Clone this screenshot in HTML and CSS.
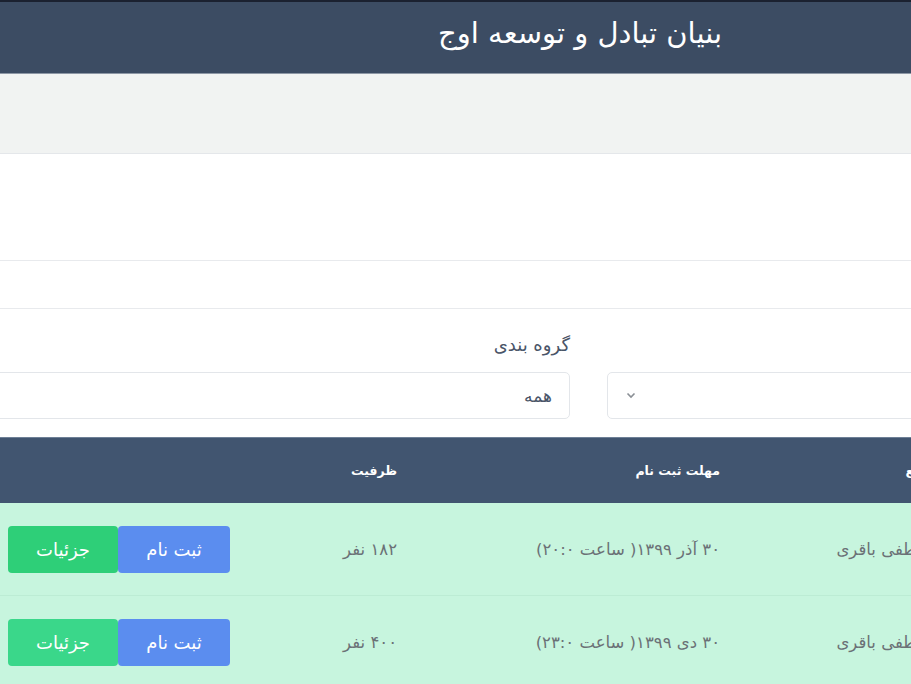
FILE: index.html
```html
<!DOCTYPE html>
<html lang="fa">
<head>
<meta charset="utf-8">
<title>بنیان تبادل و توسعه اوج</title>
<link rel="stylesheet" href="styles.css">
</head>
<body>
<div class="page">
  <header class="topbar">
    <h1 class="title">بنیان تبادل و توسعه اوج</h1>
  </header>
  <div class="band"></div>
  <div class="section tall"></div>
  <div class="section short"></div>
  <div class="filters">
    <div class="field">
      <div class="label"></div>
      <div class="select">
        <span class="value"></span>
        <svg class="chev" width="10" height="7" viewBox="0 0 10 7"><polyline points="1.5,1.5 5,5 8.5,1.5" fill="none" stroke="#8a8f95" stroke-width="1.6"/></svg>
      </div>
    </div>
    <div class="field">
      <div class="label">گروه بندی</div>
      <div class="select">
        <span class="value">همه</span>
        <svg class="chev" width="10" height="7" viewBox="0 0 10 7"><polyline points="1.5,1.5 5,5 8.5,1.5" fill="none" stroke="#8a8f95" stroke-width="1.6"/></svg>
      </div>
    </div>
  </div>
  <div class="table">
    <div class="row head">
      <div class="cell"></div>
      <div class="cell">مرجع</div>
      <div class="cell">مهلت ثبت نام</div>
      <div class="cell">ظرفیت</div>
      <div class="cell"></div>
    </div>
    <div class="row">
      <div class="cell"></div>
      <div class="cell">مصطفی باقری</div>
      <div class="cell">۳۰ آذر ۱۳۹۹( ساعت ۲۰:۰)</div>
      <div class="cell">۱۸۲ نفر</div>
      <div class="cell actions">
        <button class="btn blue">ثبت نام</button>
        <button class="btn green">جزئیات</button>
      </div>
    </div>
    <div class="row">
      <div class="cell"></div>
      <div class="cell">مصطفی باقری</div>
      <div class="cell">۳۰ دی ۱۳۹۹( ساعت ۲۳:۰)</div>
      <div class="cell">۴۰۰ نفر</div>
      <div class="cell actions">
        <button class="btn blue">ثبت نام</button>
        <button class="btn green light">جزئیات</button>
      </div>
    </div>
  </div>
</div>
</body>
</html>
```
FILE: styles.css
```css
html, body {
  margin: 0;
  padding: 0;
  overflow: hidden;
  background: #ffffff;
}
body {
  font-family: "DejaVu Sans", "Noto Sans", sans-serif;
}
.page {
  direction: rtl;
  width: 1277px;
  margin-left: -50px;
}
.topbar {
  box-sizing: border-box;
  height: 74px;
  border-top: 2px solid #1b2130;
  border-bottom: 1px solid #8d97a5;
  background: #3c4c63;
  padding-right: 505px;
  padding-bottom: 8px;
  display: flex;
  align-items: center;
}
.title {
  margin: 0;
  color: #ffffff;
  font-size: 29px;
  font-weight: normal;
  line-height: 1;
}
.band {
  height: 79px;
  background: #f1f3f2;
  border-bottom: 1px solid #e4e7ea;
}
.section {
  border-bottom: 1px solid #e8eaed;
}
.section.tall { height: 106px; }
.section.short { height: 47px; }
.filters {
  display: grid;
  grid-template-columns: 610px 610px;
  gap: 37px;
  padding: 24px 10px 18px 10px;
}
.label {
  height: 24px;
  line-height: 24px;
  font-size: 18px;
  color: #4a5568;
  margin-bottom: 15px;
}
.select {
  box-sizing: border-box;
  height: 47px;
  border: 1px solid #e3e6ea;
  border-radius: 5px;
  display: flex;
  align-items: center;
  justify-content: space-between;
  padding: 0 17px 0 18px;
  font-size: 17px;
  color: #4a5568;
}
.chev { display: block; }
.table {
  padding-left: 58px;
}
.row {
  display: grid;
  grid-template-columns: 287px 220px 323px 167px 222px;
  align-items: center;
  box-sizing: border-box;
  height: 93px;
  margin-left: -58px;
  padding-left: 58px;
  background: #c7f5de;
  border-bottom: 1px solid #bcecd4;
  font-size: 16.5px;
  color: #6b7176;
}
.row.head {
  height: 66px;
  background: #415570;
  border-top: 1px solid #6e8096;
  border-bottom: none;
  color: #ffffff;
  font-size: 13px;
  font-weight: bold;
}
.row.head .cell:nth-child(3),
.row.head .cell:nth-child(4) {
  font-size: 12.5px;
}
.cell {
  text-align: right;
  white-space: nowrap;
}
.actions {
  display: flex;
  justify-content: flex-start;
}
.btn {
  box-sizing: border-box;
  height: 47px;
  border: none;
  border-radius: 4px;
  font-family: inherit;
  font-size: 18px;
  color: #ffffff;
  padding: 0;
  cursor: pointer;
}
.btn.blue { width: 112px; background: #5b8def; }
.btn.green { width: 110px; background: #2ecf78; }
.btn.green.light { background: #3ad78a; }
```
